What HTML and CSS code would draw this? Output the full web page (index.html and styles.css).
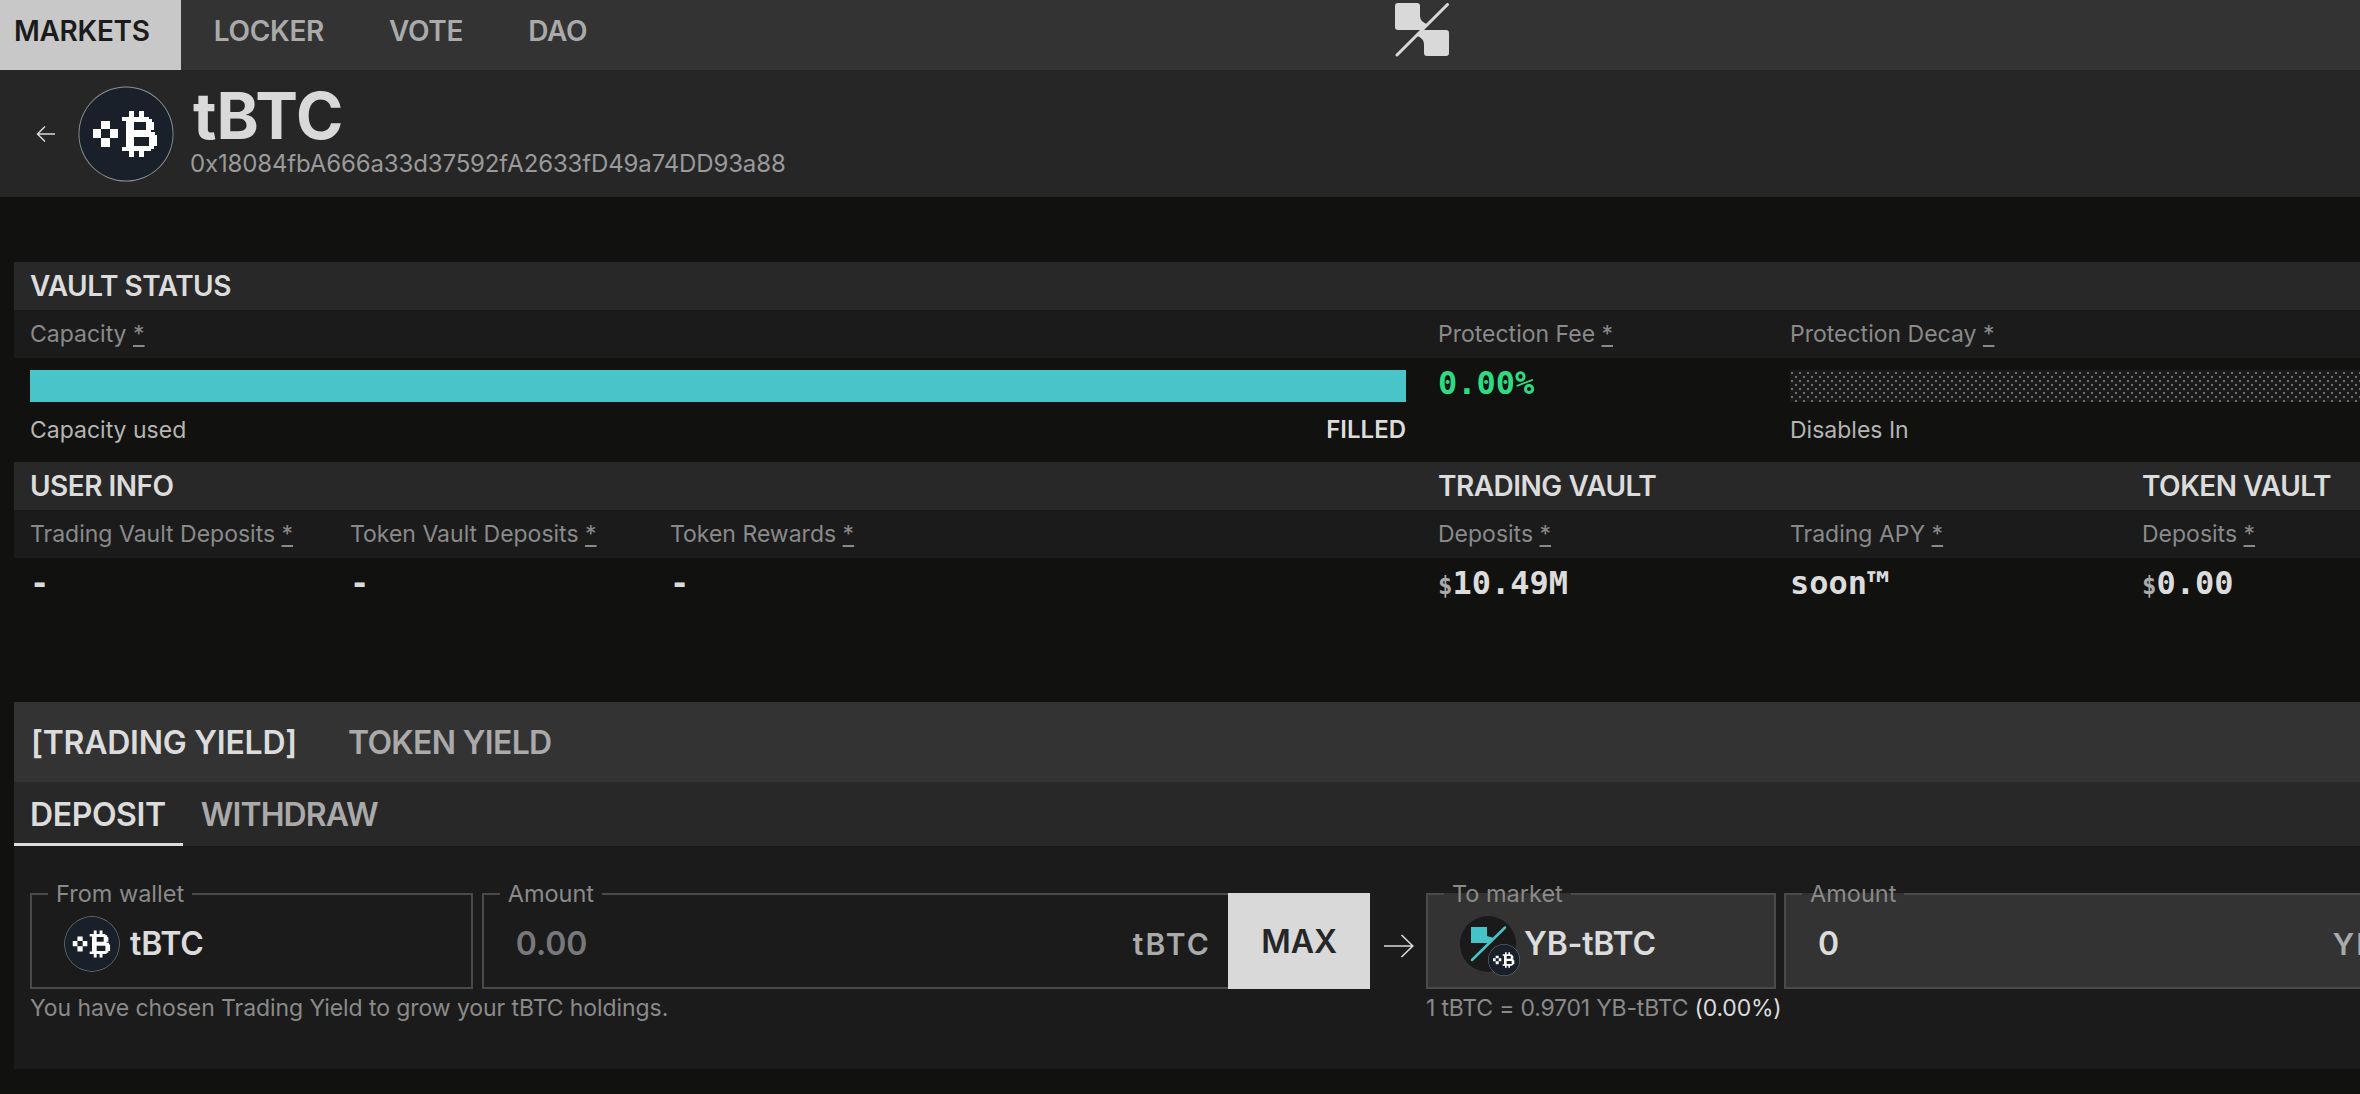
FILE: index.html
```html
<!DOCTYPE html>
<html lang="en">
<head>
  <meta charset="UTF-8" />
  <meta name="viewport" content="width=device-width, initial-scale=1.0" />
  <title>tBTC Market</title>
  <link rel="stylesheet" href="styles.css">
</head>
<body>
  <svg class="defs" width="0" height="0" aria-hidden="true">
    <symbol id="token-btc" viewBox="0 0 96 96">
      <circle cx="48" cy="48" r="47.5" fill="#8d9196"/>
      <circle cx="48" cy="48" r="46.6" fill="#1a2029"/>
      <path fill="#fff" d="M23 35h9v8h8v9h-8v9h-9v-9h-8v-9h8zM23 43v9h9v-9z" fill-rule="evenodd"/>
      <path fill="#fff" fill-rule="evenodd" d="M44 31h7v-6h5v6h5v-6h5v6h5v2h3v3h2v8h-3v2h4v3h2v11h-3v3h-3v2h-7v6h-5v-6h-5v6h-5v-6h-7v-4h4v-26h-4zM56 36v8h12v-8zM56 51v9h15v-9z"/>
    </symbol>
  </svg>

  <nav class="topnav">
    <div class="nav-links">
      <a class="nav-link active">MARKETS</a>
      <a class="nav-link">LOCKER</a>
      <a class="nav-link">VOTE</a>
      <a class="nav-link">DAO</a>
    </div>
    <svg class="brand" viewBox="0 0 54 54" aria-label="logo">
      <path fill="#d9d9d9" d="M3 0H22a3 3 0 0 1 3 3V13q0 6 8 8.500L27 27H3a3 3 0 0 1-3-3V3a3 3 0 0 1 3-3z"/>
      <path fill="#d9d9d9" d="M51 53H32a3 3 0 0 1-3-3V41q0-6-8-8.500L27 27H51a3 3 0 0 1 3 3V50a3 3 0 0 1-3 3z"/>
      <path stroke="#d9d9d9" stroke-width="3" stroke-linecap="round" d="M52.500 1.500L2 52"/>
    </svg>
    <div></div>
  </nav>

  <header class="token-head">
    <svg class="back-arrow" viewBox="0 0 20 18" fill="none" stroke="#d9d9d9" stroke-width="1.500">
      <path d="M19 9H2M9 1.500L1.500 9 9 16.500"/>
    </svg>
    <svg class="token-logo"><use href="#token-btc"/></svg>
    <div class="token-title">
      <h1>tBTC</h1>
      <div class="token-addr">0x18084fbA666a33d37592fA2633fD49a74DD93a88</div>
    </div>
  </header>

  <main class="content">
    <section class="stats">
      <div class="stat-grid band"><h2 class="wide">VAULT STATUS</h2></div>
      <div class="stat-grid sub-band">
        <div class="wide label">Capacity <u>*</u></div>
        <div class="label">Protection Fee <u>*</u></div>
        <div class="label span-two">Protection Decay <u>*</u></div>
      </div>
      <div class="stat-grid vault-values">
        <div class="wide capacity">
          <div class="bar"></div>
          <div class="bar-foot"><span>Capacity used</span><b>FILLED</b></div>
        </div>
        <div class="value green">0.00%</div>
        <div class="span-two decay">
          <div class="hatch"></div>
          <div class="bar-foot"><span>Disables In</span></div>
        </div>
      </div>

      <div class="stat-grid band">
        <h2 class="wide">USER INFO</h2>
        <h2 class="span-two">TRADING VAULT</h2>
        <h2>TOKEN VAULT</h2>
      </div>
      <div class="stat-grid sub-band">
        <div class="label">Trading Vault Deposits <u>*</u></div>
        <div class="label">Token Vault Deposits <u>*</u></div>
        <div class="label">Token Rewards <u>*</u></div>
        <div class="label">Deposits <u>*</u></div>
        <div class="label">Trading APY <u>*</u></div>
        <div class="label">Deposits <u>*</u></div>
      </div>
      <div class="stat-grid user-values">
        <div class="value">-</div>
        <div class="value">-</div>
        <div class="value">-</div>
        <div class="value"><small>$</small>10.49M</div>
        <div class="value">soon<span class="tm">™</span></div>
        <div class="value"><small>$</small>0.00</div>
      </div>
    </section>

    <section class="yield">
      <div class="yield-tabs">
        <span class="active">[TRADING YIELD]</span>
        <span>TOKEN YIELD</span>
      </div>
      <div class="action-tabs">
        <span class="active">DEPOSIT</span>
        <span>WITHDRAW</span>
      </div>
      <div class="yield-body">
        <div class="side side-from">
          <div class="fields">
            <fieldset class="field wallet">
              <legend>From wallet</legend>
              <svg class="field-logo"><use href="#token-btc"/></svg>
              <span class="field-token">tBTC</span>
            </fieldset>
            <fieldset class="field amount">
              <legend>Amount</legend>
              <span class="amount-num muted">0.00</span>
              <span class="amount-unit">tBTC</span>
            </fieldset>
            <button class="max-btn">MAX</button>
          </div>
          <p class="hint">You have chosen Trading Yield to grow your tBTC holdings.</p>
        </div>

        <svg class="go-arrow" viewBox="0 0 30 24" fill="none" stroke="#d9d9d9" stroke-width="1.600">
          <path d="M0 12h28.500M17.500 1L28.800 12 17.500 23"/>
        </svg>

        <div class="side side-to">
          <div class="fields">
            <fieldset class="field market light">
              <legend>To market</legend>
              <span class="market-logo">
                <svg class="yb-logo" viewBox="0 0 56 56">
                  <circle cx="28" cy="28" r="28" fill="#1a1a1a"/>
                  <path fill="#46c3c9" d="M11 11H27V20L34 22 28 27H11z"/>
                  <path stroke="#46c3c9" stroke-width="2.500" stroke-linecap="round" d="M45 11.500L12 44"/>
                </svg>
                <svg class="yb-badge"><use href="#token-btc"/></svg>
              </span>
              <span class="field-token">YB-tBTC</span>
            </fieldset>
            <fieldset class="field amount-out light">
              <legend>Amount</legend>
              <span class="amount-num">0</span>
              <span class="amount-unit">YB-tBTC</span>
            </fieldset>
          </div>
          <p class="hint">1 tBTC = 0.9701 YB-tBTC <em>(0.00%)</em></p>
        </div>
      </div>
    </section>
  </main>
</body>
</html>
```

FILE: styles.css
```css
:root {
  --page-bg: #11110f;
  --nav-bg: #333333;
  --band-bg: #282828;
  --sub-bg: #1b1b1b;
  --line: #4a4a4a;
  --text: #dcdcdc;
  --text-dim: #8a8a8a;
  --teal: #49c4c9;
  --green: #2ddc82;
}
* { box-sizing: border-box; margin: 0; padding: 0; }
html { overflow: hidden; }
body {
  width: 2844px;
  background: var(--page-bg);
  color: var(--text);
  font-family: Inter, "Liberation Sans", sans-serif;
  font-size: 24px;
}
.defs { position: absolute; }

.topnav {
  display: grid;
  grid-template-columns: 1fr 54px 1fr;
  align-items: start;
  height: 70px;
  background: var(--nav-bg);
}
.nav-links { display: flex; height: 70px; }
.nav-link {
  display: flex;
  align-items: center;
  padding: 0 32.500px 9px;
  font-size: 28px;
  font-weight: 600;
  letter-spacing: -0.3px;
  color: #aaaaaa;
}
.nav-link.active {
  padding: 0 31.500px 9px 14px;
  background: #c8c8c8;
  color: #1b1b1b;
}
.brand { width: 54px; height: 54px; margin-top: 3px; }

.token-head {
  display: flex;
  align-items: center;
  height: 127px;
  padding-left: 36px;
  background: #262626;
}
.back-arrow { width: 20px; height: 18px; margin-right: 22px; }
.token-logo { width: 96px; height: 96px; margin-right: 17px; }
.token-title h1 {
  margin-top: -3px;
  margin-left: 2px;
  font-size: 64px;
  font-weight: 700;
  line-height: 60px;
  color: #d9d9d9;
}
.token-addr {
  margin-top: 3px;
  margin-left: -1px;
  font-size: 24px;
  letter-spacing: -0.14px;
  line-height: 30px;
  color: #9a9a9a;
}

.content { padding: 65px 14px 0; }

.stat-grid {
  display: grid;
  grid-template-columns: 320px 320px 768px 352px 352px 352px;
  padding-left: 16px;
}
.wide { grid-column: span 3; }
.span-two { grid-column: span 2; }
.band { align-items: center; height: 48px; background: var(--band-bg); }
.band h2 { font-size: 28px; font-weight: 600; letter-spacing: -0.5px; color: var(--text); }
.sub-band { align-items: center; height: 48px; background: var(--sub-bg); }
.label { font-size: 23px; color: var(--text-dim); }
.label u { text-underline-offset: 3px; }

.vault-values { height: 104px; padding-top: 12px; }
.capacity { padding-right: 32px; }
.bar { height: 32px; background: var(--teal); }
.hatch {
  height: 32px;
  background-color: #1a1a1a;
  background-image:
    radial-gradient(circle at 1px 1px, #6e6e6e 1px, transparent 1.2px),
    radial-gradient(circle at 1px 1px, #6e6e6e 1px, transparent 1.2px);
  background-size: 8px 8px;
  background-position: 1px 2px, 5px 6px;
}
.bar-foot {
  display: flex;
  justify-content: space-between;
  margin-top: 14px;
  font-size: 23px;
  line-height: 28px;
  color: #b5b5b5;
}
.bar-foot b { font-size: 24px; font-weight: 600; color: var(--text); }

.value {
  font-family: "DejaVu Sans Mono", "Liberation Mono", monospace;
  font-size: 32px;
  font-weight: 700;
  line-height: 26px;
}
.value small { font-size: 24px; color: #aaaaaa; }
.tm { font-size: 38px; line-height: 0; vertical-align: -5px; }
.green { color: var(--green); }
.user-values { height: 144px; padding-top: 12px; }

.yield { background: var(--sub-bg); height: 367px; }
.yield-tabs {
  display: flex;
  align-items: center;
  gap: 51px;
  height: 80px;
  padding-left: 17px;
  background: var(--nav-bg);
  font-size: 32px;
  font-weight: 600;
  letter-spacing: -0.7px;
  color: #aaaaaa;
}
.yield-tabs .active { letter-spacing: -0.25px; color: var(--text); }
.action-tabs {
  display: flex;
  height: 64px;
  background: var(--band-bg);
  font-size: 32px;
  font-weight: 600;
  letter-spacing: -0.9px;
  color: #aaaaaa;
}
.action-tabs span { display: flex; align-items: center; padding: 0 16px 0 18px; height: 100%; }
.action-tabs .active {
  padding: 3px 17px 0 16px;
  letter-spacing: -0.4px;
  color: var(--text);
  border-bottom: 3px solid var(--text);
}
.yield-body { display: flex; align-items: flex-start; padding: 47px 0 0 16px; }
.fields { display: flex; align-items: flex-start; }
.side-from { width: 1340px; }
.side-to { width: 1400px; }

.field {
  display: flex;
  align-items: center;
  height: 104px;
  margin-top: -8px;
  padding: 0 17px 3px 32px;
  border: 2px solid var(--line);
  font-family: inherit;
}
.field legend {
  margin-left: -16px;
  padding: 0 8px;
  font-size: 23.500px;
  line-height: 18px;
  color: var(--text-dim);
}
.wallet { width: 443px; margin-right: 9px; }
.amount { width: 747px; justify-content: space-between; border-right: 0; }
.market { width: 350px; margin-right: 8px; }
.amount-out { width: 708px; justify-content: space-between; }
.light { background: var(--nav-bg); }
.field-logo { width: 56px; height: 56px; margin-right: 10px; }
.field-token { font-size: 32px; font-weight: 600; letter-spacing: -0.2px; }
.amount-num { font-size: 32px; font-weight: 600; }
.muted { color: #77777c; }
.amount-unit { font-size: 30px; font-weight: 600; letter-spacing: 2.200px; color: #aaaaaa; }
.max-btn {
  width: 142px;
  height: 96px;
  border: none;
  background: #d9d9d9;
  color: #262626;
  font-family: inherit;
  font-size: 32px;
  font-weight: 600;
}
.market-logo { position: relative; display: block; width: 56px; height: 56px; margin-right: 8px; }
.yb-logo { width: 56px; height: 56px; display: block; }
.yb-badge { position: absolute; left: 28px; top: 28px; width: 32px; height: 32px; }
.go-arrow { width: 30px; height: 24px; margin: 41px 12px 0 14px; }
.hint { margin-top: 4px; font-size: 23px; letter-spacing: -0.08px; line-height: 30px; color: var(--text-dim); }
.side-to .hint { letter-spacing: -0.2px; }
.hint em { font-style: normal; color: var(--text); }
```
